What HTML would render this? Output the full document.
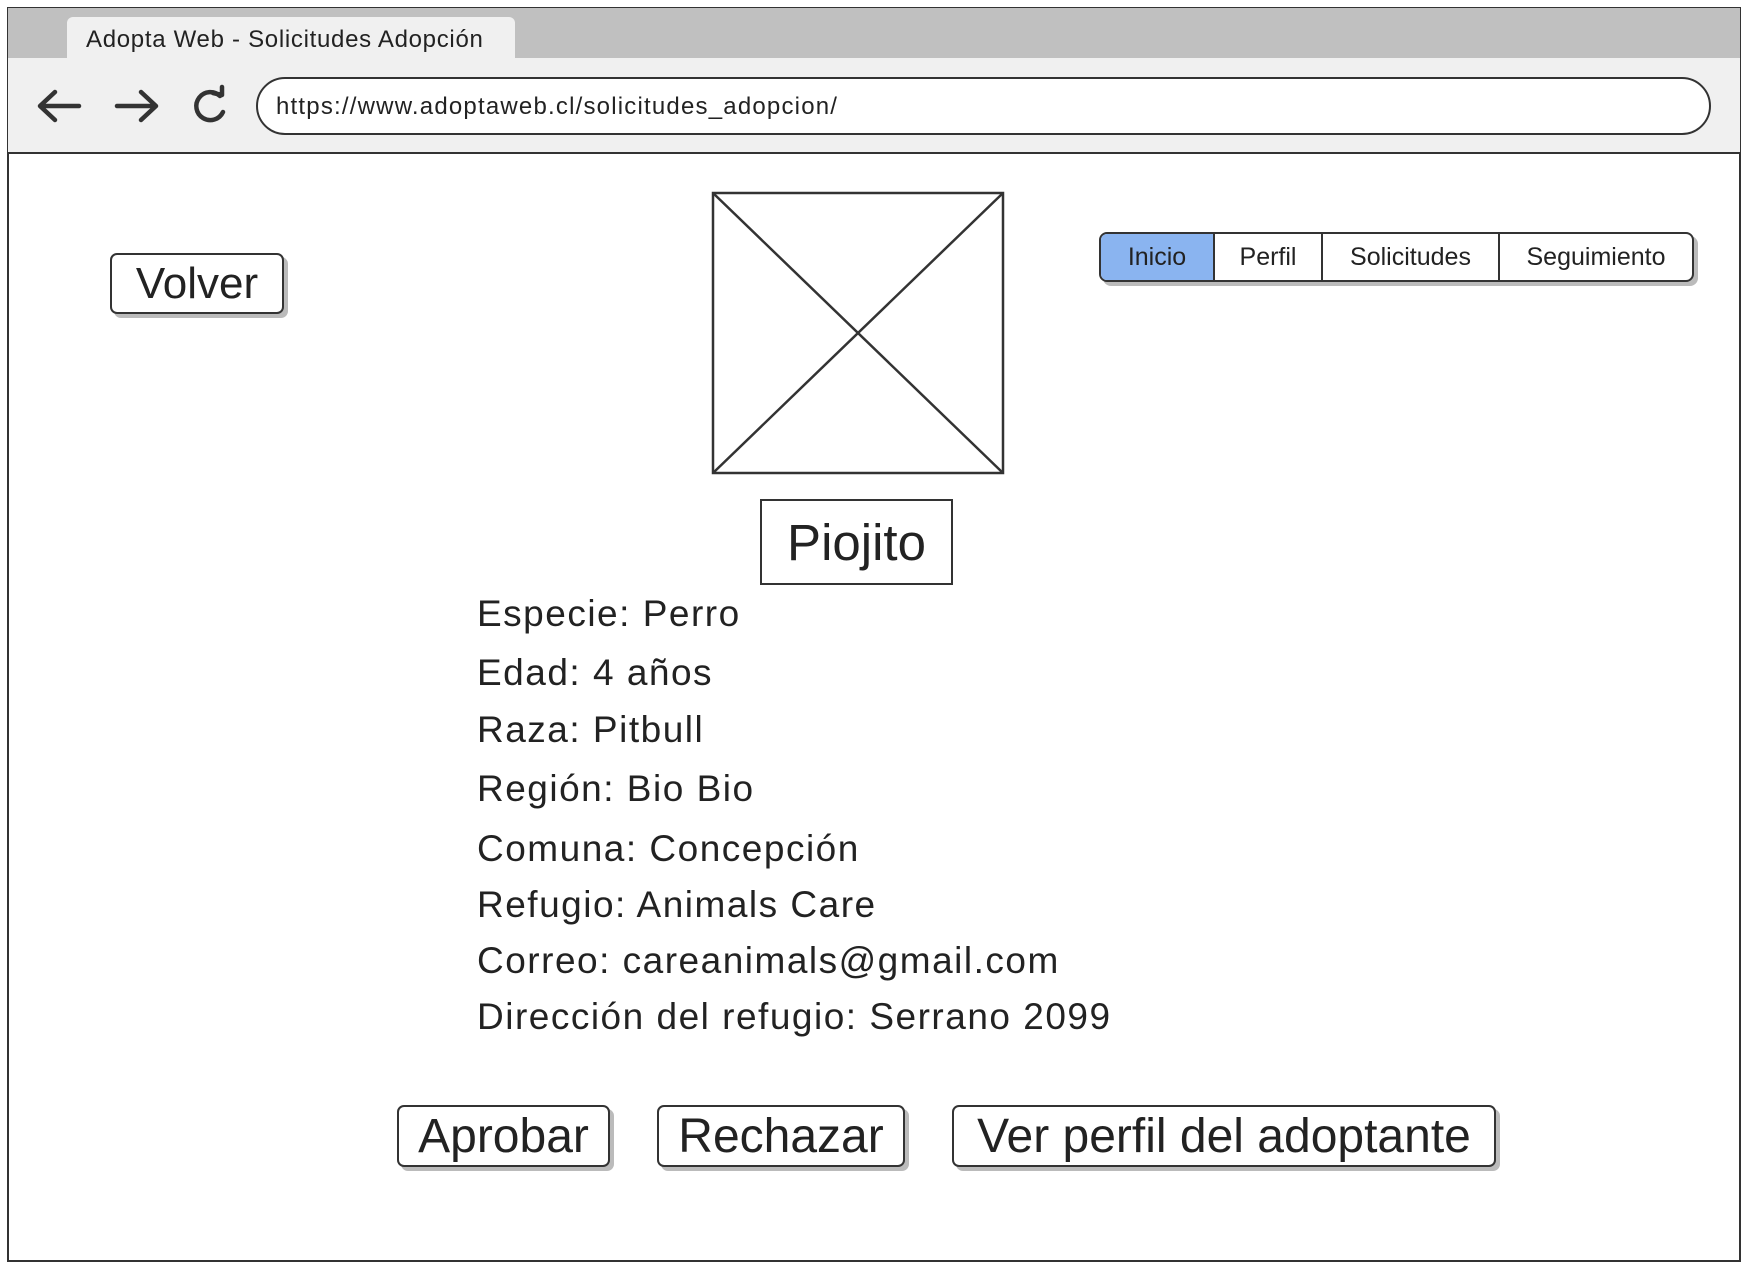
<!DOCTYPE html>
<html><head><meta charset="utf-8"><style>
*{margin:0;padding:0;box-sizing:border-box}
body{width:1748px;height:1266px;background:#fff;position:relative;overflow:hidden;font-family:"Liberation Sans",sans-serif;color:#222}
.a{position:absolute}
.btn{position:absolute;border:2.5px solid #333;border-radius:7px;background:#fff;box-shadow:4px 4px 0 #bbb;display:flex;align-items:center;justify-content:center}
.t{position:absolute;left:477px;font-size:37px;line-height:44px;white-space:nowrap;letter-spacing:1.5px}
</style></head><body>
<div class="a" style="left:7px;top:7px;width:1734px;height:1255px;border:2px solid #333;"></div>
<div class="a" style="left:8px;top:8px;width:1732px;height:50px;background:#c0c0c0"></div>
<div class="a" style="left:67px;top:17px;width:448px;height:42px;background:#f0f0f0;border-radius:6px 6px 0 0"></div>
<div class="a" style="left:86px;top:25px;font-size:24px;line-height:30px;color:#222;letter-spacing:0.7px">Adopta Web - Solicitudes Adopción</div>
<div class="a" style="left:8px;top:58px;width:1732px;height:96px;background:#f0f0f0;border-bottom:2.5px solid #333"></div>
<div class="a" style="left:256px;top:77px;width:1455px;height:58px;border:2.5px solid #333;border-radius:29px;background:#fff"></div>
<div class="a" style="left:276px;top:92px;font-size:24px;line-height:30px;letter-spacing:1.2px">https://www.adoptaweb.cl/solicitudes_adopcion/</div>
<svg class="a" style="left:30px;top:84px" width="210" height="46" viewBox="0 0 210 46" fill="none" stroke="#333" stroke-width="4.5" stroke-linecap="round" stroke-linejoin="round">
<path d="M49 22H11M25 8L10 22L25 36"/>
<path d="M87 22H125M111 8L126 22L111 36"/>
<path d="M190 12A14 14 0 1 0 193 28"/><path d="M183 9L192 11L192 3"/>
</svg>
<div class="btn" style="left:110px;top:253px;width:174px;height:61px;font-size:44px">Volver</div>
<svg class="a" style="left:711px;top:191px" width="294" height="284" fill="none" stroke="#333" stroke-width="2.5">
<rect x="2" y="2" width="290" height="280"/><path d="M2 2L292 282M292 2L2 282"/>
</svg>
<div class="a" style="left:760px;top:499px;width:193px;height:86px;border:2.5px solid #333;display:flex;align-items:center;justify-content:center;font-size:51px">Piojito</div>
<div class="a" style="left:1099px;top:232px;width:595px;height:50px;border:2.5px solid #333;border-radius:8px;box-shadow:4px 4px 0 #bbb;background:#fff;display:flex;font-size:25px;overflow:hidden">
<div style="width:114px;background:#8ab4f0;border-right:2px solid #333;display:flex;align-items:center;justify-content:center">Inicio</div>
<div style="width:108px;border-right:2px solid #333;display:flex;align-items:center;justify-content:center">Perfil</div>
<div style="width:177px;border-right:2px solid #333;display:flex;align-items:center;justify-content:center">Solicitudes</div>
<div style="flex:1;display:flex;align-items:center;justify-content:center">Seguimiento</div>
</div>
<div class="t" style="top:592px">Especie: Perro</div>
<div class="t" style="top:651px">Edad: 4 años</div>
<div class="t" style="top:708px">Raza: Pitbull</div>
<div class="t" style="top:767px">Región: Bio Bio</div>
<div class="t" style="top:827px">Comuna: Concepción</div>
<div class="t" style="top:883px">Refugio: Animals Care</div>
<div class="t" style="top:939px">Correo: careanimals@gmail.com</div>
<div class="t" style="top:995px">Dirección del refugio: Serrano 2099</div>
<div class="btn" style="left:397px;top:1105px;width:213px;height:62px;font-size:48px">Aprobar</div>
<div class="btn" style="left:657px;top:1105px;width:248px;height:62px;font-size:48px">Rechazar</div>
<div class="btn" style="left:952px;top:1105px;width:544px;height:62px;font-size:48px">Ver perfil del adoptante</div>
</body></html>
